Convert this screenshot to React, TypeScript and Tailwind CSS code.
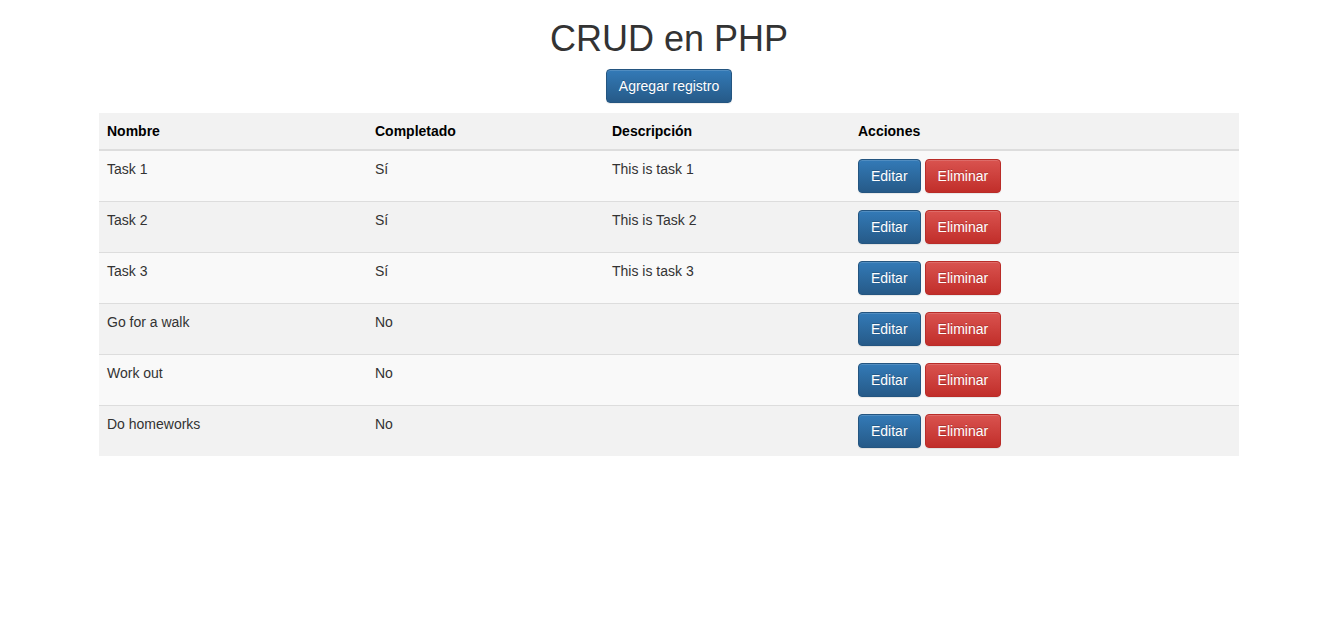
import React from "react";

const rows = [
  { n: "Task 1", c: "Sí", d: "This is task 1" },
  { n: "Task 2", c: "Sí", d: "This is Task 2" },
  { n: "Task 3", c: "Sí", d: "This is task 3" },
  { n: "Go for a walk", c: "No", d: "" },
  { n: "Work out", c: "No", d: "" },
  { n: "Do homeworks", c: "No", d: "" },
];

const btnBase =
  "inline-block h-[34px] px-3 rounded-[4px] border text-[14px] leading-5 text-white [text-shadow:0_-1px_0_rgba(0,0,0,0.2)] shadow-[inset_0_1px_0_rgba(255,255,255,0.15),0_1px_1px_rgba(0,0,0,0.075)]";
const primary = "bg-[linear-gradient(to_bottom,#337ab7_0%,#265a88_100%)] border-[#245580]";
const danger = "bg-[linear-gradient(to_bottom,#d9534f_0%,#c12e2a_100%)] border-[#b92c28]";

export default function App() {
  return (
    <div className="min-h-[631px] bg-white text-[#333] text-[14px] leading-5 font-['Liberation_Sans',Arial,sans-serif]">
      <div className="w-[1140px] ml-[99px]">
        <h1 className="text-center text-[36px] leading-[1.1] font-normal mt-[19px] mb-[10px] text-[#333]">CRUD en PHP</h1>
        <div className="flex justify-center mb-[10px]">
          <button className={`${btnBase} ${primary}`}>Agregar registro</button>
        </div>
        <table className="w-full border-collapse bg-[#f2f2f2]">
          <colgroup>
            <col className="w-[268px]" />
            <col className="w-[237px]" />
            <col className="w-[246px]" />
            <col />
          </colgroup>
          <thead>
            <tr className="border-b-2 border-[#ddd]">
              <th className="text-left p-2 font-bold text-black">Nombre</th>
              <th className="text-left p-2 font-bold text-black">Completado</th>
              <th className="text-left p-2 font-bold text-black">Descripción</th>
              <th className="text-left p-2 font-bold text-black">Acciones</th>
            </tr>
          </thead>
          <tbody>
            {rows.map((r, i) => (
              <tr key={i} className={`${i > 0 ? "border-t border-[#ddd]" : ""} ${i % 2 === 0 ? "bg-[#f9f9f9]" : "bg-[#f2f2f2]"}`}>
                <td className="p-2 align-top">{r.n}</td>
                <td className="p-2 align-top">{r.c}</td>
                <td className="p-2 align-top">{r.d}</td>
                <td className="p-2 align-top">
                  <div className="flex gap-1">
                    <button className={`${btnBase} ${primary}`}>Editar</button>
                    <button className={`${btnBase} ${danger}`}>Eliminar</button>
                  </div>
                </td>
              </tr>
            ))}
          </tbody>
        </table>
      </div>
    </div>
  );
}
